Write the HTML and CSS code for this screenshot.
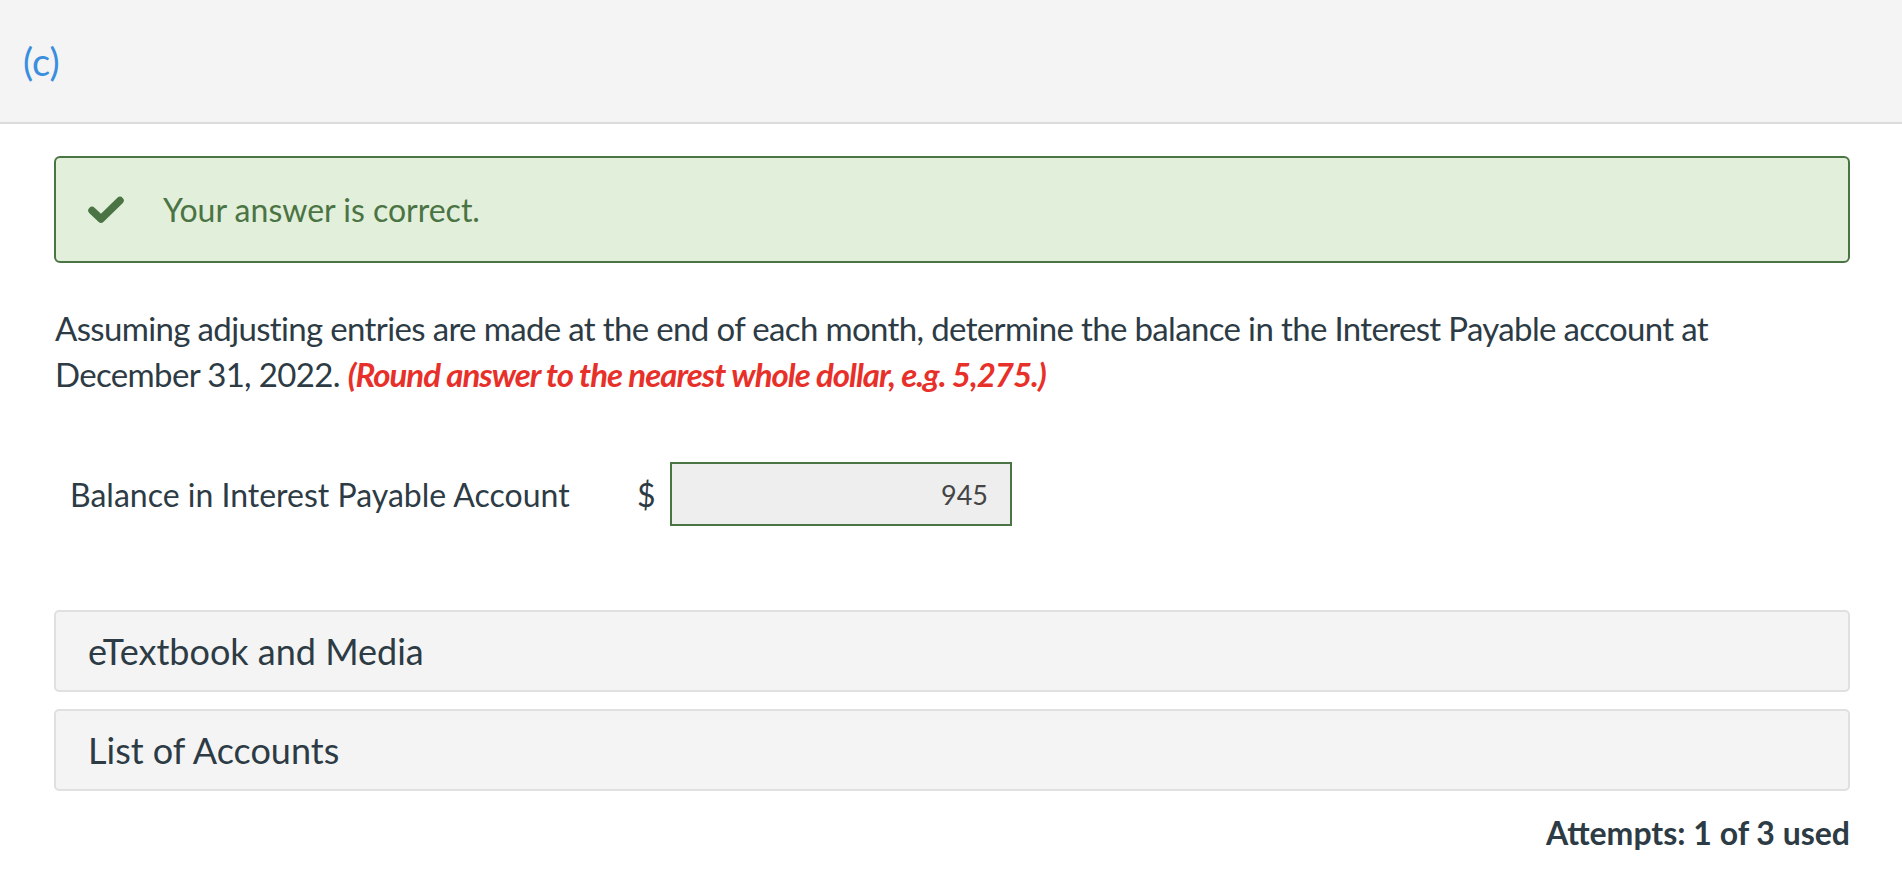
FILE: index.html
```html
<!DOCTYPE html>
<html>
<head>
<meta charset="utf-8">
<link rel="stylesheet" href="styles.css">
</head>
<body>
<header class="part-header">
  <span class="part-label">(c)</span>
</header>
<main class="content">
  <div class="alert-success">
    <svg class="check" viewBox="0 0 38 30" width="38" height="30">
      <path d="M5 15.5 L14 24 L33 5.5" fill="none" stroke="#4a7443" stroke-width="7.5" stroke-linecap="round" stroke-linejoin="round"/>
    </svg>
    <span class="alert-text">Your answer is correct.</span>
  </div>
  <p class="question">Assuming adjusting entries are made at the end of each month, determine the balance in the Interest Payable account at December 31, 2022. <em class="hint">(Round answer to the nearest whole dollar, e.g. 5,275.)</em></p>
  <div class="answer-row">
    <span class="answer-label">Balance in Interest Payable Account</span>
    <span class="currency">$</span>
    <div class="answer-input">945</div>
  </div>
  <div class="accordion">eTextbook and Media</div>
  <div class="accordion">List of Accounts</div>
  <div class="attempts">Attempts: 1 of 3 used</div>
</main>
</body>
</html>
```
FILE: styles.css
```css
html, body {
  margin: 0;
  padding: 0;
  background: #ffffff;
  font-family: Lato, "Open Sans", sans-serif;
  color: #2d3b45;
}
.part-header {
  height: 122px;
  background: #f4f4f4;
  border-bottom: 2px solid #dcdcdc;
  display: flex;
  align-items: center;
  padding-left: 23px;
}
.part-label {
  font-size: 38px;
  color: #3a8ede;
}
.content {
  padding: 32px 52px 0 54px;
}
.alert-success {
  height: 103px;
  box-sizing: content-box;
  border: 2px solid #4a7443;
  border-radius: 6px;
  background: #e2efdb;
  display: flex;
  align-items: center;
  padding-left: 31px;
}
.check {
  display: block;
  margin-right: 38px;
}
.alert-text {
  font-size: 32px;
  color: #4a7443;
}
.question {
  margin: 42px 0 0 1px;
  font-size: 33px;
  line-height: 46px;
  letter-spacing: -0.65px;
}
.hint {
  color: #e8302a;
  font-weight: bold;
  font-style: italic;
  letter-spacing: -1px;
}
.answer-row {
  display: flex;
  align-items: center;
  margin-top: 65px;
  padding-left: 16px;
}
.answer-label {
  font-size: 32px;
  width: 567px;
}
.currency {
  font-size: 32px;
  width: 33px;
}
.answer-input {
  width: 316px;
  height: 60px;
  border: 2px solid #4a7443;
  background: #eeeeee;
  font-size: 27px;
  color: #444444;
  display: flex;
  align-items: center;
  justify-content: flex-end;
  padding-right: 22px;
  box-sizing: content-box;
}
.accordion {
  margin-top: 84px;
  height: 78px;
  border: 2px solid #e0e0e0;
  border-radius: 5px;
  background: #f4f4f4;
  display: flex;
  align-items: center;
  padding-left: 32px;
  font-size: 36px;
}
.accordion + .accordion {
  margin-top: 17px;
}
.attempts {
  text-align: right;
  font-weight: bold;
  font-size: 32px;
  margin-top: 22px;
}
```
